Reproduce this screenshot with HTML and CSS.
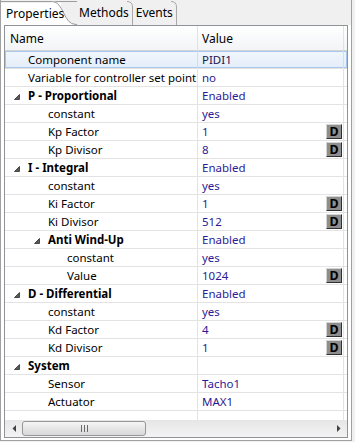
FILE: index.html
```html
<!DOCTYPE html>
<html>
<head>
<meta charset="utf-8">
<link rel="stylesheet" href="styles.css">
</head>
<body>
<div class="frame">
  <div class="tabs">
    <div class="tab active">
      <span class="tab-label">Properties</span>
      <svg class="curve-big" width="26" height="25" viewBox="0 0 26 25">
        <path d="M0 1 H1 C13 1 12 25 25 25 H26 V25 H0 Z" fill="#ffffff"/>
        <path d="M0 1.5 H1 C13 1.5 12 24.5 25 24.5 H26" fill="none" stroke="#9c9c9c"/>
      </svg>
    </div>
    <div class="tab">Methods</div>
    <svg class="curve-small" width="6" height="25" viewBox="0 0 6 25"><path d="M0 1.5 Q5.5 1.5 5.5 7 V25" fill="none" stroke="#a8a8a8"/></svg>
    <div class="tab">Events</div>
    <svg class="curve-small" width="6" height="25" viewBox="0 0 6 25"><path d="M0 1.5 Q5.5 1.5 5.5 7 V25" fill="none" stroke="#a8a8a8"/></svg>
  </div>
  <div class="panel">
    <div class="tree">
      <div class="header">
        <div class="c1">Name</div>
        <div class="c2">Value</div>
      </div>
      <div class="rows">
        <div class="row sel"><div class="c1 l0"><span class="tw"></span>Component name</div><div class="c2"><span class="v">PIDI1</span></div></div>
        <div class="row"><div class="c1 l0"><span class="tw"></span>Variable for controller set point</div><div class="c2"><span class="v">no</span></div></div>
        <div class="row grp"><div class="c1 l0"><span class="tw"><svg width="6" height="6" viewBox="0 0 6 6"><polygon points="5.5,0.5 5.5,5.5 0.5,5.5" fill="#5a5a5a" stroke="#2e2e2e" stroke-width="0.8"/></svg></span>P - Proportional</div><div class="c2"><span class="v">Enabled</span></div></div>
        <div class="row"><div class="c1 l1"><span class="tw"></span>constant</div><div class="c2"><span class="v">yes</span></div></div>
        <div class="row"><div class="c1 l1"><span class="tw"></span>Kp Factor</div><div class="c2"><span class="v">1</span><span class="dbtn">D</span></div></div>
        <div class="row"><div class="c1 l1"><span class="tw"></span>Kp Divisor</div><div class="c2"><span class="v">8</span><span class="dbtn">D</span></div></div>
        <div class="row grp"><div class="c1 l0"><span class="tw"><svg width="6" height="6" viewBox="0 0 6 6"><polygon points="5.5,0.5 5.5,5.5 0.5,5.5" fill="#5a5a5a" stroke="#2e2e2e" stroke-width="0.8"/></svg></span>I - Integral</div><div class="c2"><span class="v">Enabled</span></div></div>
        <div class="row"><div class="c1 l1"><span class="tw"></span>constant</div><div class="c2"><span class="v">yes</span></div></div>
        <div class="row"><div class="c1 l1"><span class="tw"></span>Ki Factor</div><div class="c2"><span class="v">1</span><span class="dbtn">D</span></div></div>
        <div class="row"><div class="c1 l1"><span class="tw"></span>Ki Divisor</div><div class="c2"><span class="v">512</span><span class="dbtn">D</span></div></div>
        <div class="row grp"><div class="c1 l1"><span class="tw"><svg width="6" height="6" viewBox="0 0 6 6"><polygon points="5.5,0.5 5.5,5.5 0.5,5.5" fill="#5a5a5a" stroke="#2e2e2e" stroke-width="0.8"/></svg></span>Anti Wind-Up</div><div class="c2"><span class="v">Enabled</span></div></div>
        <div class="row"><div class="c1 l2"><span class="tw"></span>constant</div><div class="c2"><span class="v">yes</span></div></div>
        <div class="row"><div class="c1 l2"><span class="tw"></span>Value</div><div class="c2"><span class="v">1024</span><span class="dbtn">D</span></div></div>
        <div class="row grp"><div class="c1 l0"><span class="tw"><svg width="6" height="6" viewBox="0 0 6 6"><polygon points="5.5,0.5 5.5,5.5 0.5,5.5" fill="#5a5a5a" stroke="#2e2e2e" stroke-width="0.8"/></svg></span>D - Differential</div><div class="c2"><span class="v">Enabled</span></div></div>
        <div class="row"><div class="c1 l1"><span class="tw"></span>constant</div><div class="c2"><span class="v">yes</span></div></div>
        <div class="row"><div class="c1 l1"><span class="tw"></span>Kd Factor</div><div class="c2"><span class="v">4</span><span class="dbtn">D</span></div></div>
        <div class="row"><div class="c1 l1"><span class="tw"></span>Kd Divisor</div><div class="c2"><span class="v">1</span><span class="dbtn">D</span></div></div>
        <div class="row grp"><div class="c1 l0"><span class="tw"><svg width="6" height="6" viewBox="0 0 6 6"><polygon points="5.5,0.5 5.5,5.5 0.5,5.5" fill="#5a5a5a" stroke="#2e2e2e" stroke-width="0.8"/></svg></span>System</div><div class="c2"></div></div>
        <div class="row"><div class="c1 l1"><span class="tw"></span>Sensor</div><div class="c2"><span class="v">Tacho1</span></div></div>
        <div class="row"><div class="c1 l1"><span class="tw"></span>Actuator</div><div class="c2"><span class="v">MAX1</span></div></div>
        <div class="filler"><div class="c1"></div><div class="c2"></div></div>
      </div>
      <div class="hscroll">
        <div class="sb-btn"><svg width="4" height="7" viewBox="0 0 4 7"><polygon points="4,0 4,7 0.5,3.5" fill="#404040"/></svg></div>
        <div class="thumb"><svg width="7" height="7" viewBox="0 0 7 7"><path d="M0.5 0 V7 M3.5 0 V7 M6.5 0 V7" stroke="#6a6a6a"/></svg></div>
        <div class="sb-track"></div>
        <div class="sb-btn"><svg width="4" height="7" viewBox="0 0 4 7"><polygon points="0,0 0,7 3.5,3.5" fill="#404040"/></svg></div>
      </div>
    </div>
  </div>
</div>
</body>
</html>
```

FILE: styles.css
```css
* { box-sizing: border-box; margin: 0; padding: 0; }
html, body { width: 355px; height: 442px; overflow: hidden; }
body {
  background: #f0f0f0;
  font-family: "Noto Sans", "Open Sans", sans-serif;
  font-size: 11.5px;
  color: #000;
}
.frame {
  width: 352px;
  height: 441px;
  border: 1px solid #a0a0a0;
  border-top: none;
  display: flex;
  flex-direction: column;
}
.tabs {
  height: 25px;
  flex: none;
  display: flex;
  align-items: stretch;
  background: #f0f0f0;
  font-size: 12px;
}
.tab {
  display: flex;
  align-items: center;
  padding: 0 0 1px 3px;
  white-space: nowrap;
}
.tab.active {
  background: linear-gradient(#ffffff, #ffffff) no-repeat 0 1px / 60px 24px;
  padding: 0;
  border-top: 1px solid #9c9c9c;
  margin-top: 1px;
  width: 76px;
  align-items: flex-start;
}
.tab-label {
  position: relative;
  z-index: 1;
  padding: 3px 0 0 5px;
  width: 60px;
}
.curve-big {
  flex: none;
  margin-left: -10px;
  margin-top: -2px;
}
.tabs .tab:nth-child(2) { padding-left: 2px; padding-right: 0; }
.curve-small { flex: none; margin-left: -2px; }
.panel {
  flex: 1;
  background: #fff;
  padding: 0 3px 2px 3px;
  display: flex;
}
.tree {
  flex: 1;
  border: 1px solid #8f9398;
  display: flex;
  flex-direction: column;
  background: #fff;
}
.header {
  height: 25px;
  flex: none;
  display: flex;
  background: linear-gradient(#ffffff, #f3f4f6);
  border-bottom: 1px solid #d5d5d5;
}
.header .c1, .header .c2 {
  display: flex;
  align-items: center;
  font-size: 12px;
}
.c1 {
  width: 193px;
  flex: none;
  border-right: 1px solid #e3e3e3;
  padding-left: 5px;
  white-space: nowrap;
  overflow: hidden;
  display: flex;
  align-items: center;
}
.c2 {
  width: 146px;
  flex: none;
  border-right: 1px solid #e3e3e3;
  padding-left: 4px;
  display: flex;
  align-items: center;
  white-space: nowrap;
}
.rows {
  flex: 1;
  display: flex;
  flex-direction: column;
}
.row {
  height: 18px;
  flex: none;
  display: flex;
  border-bottom: 1px solid #e3e3e3;
}
.row .c1 { padding-left: 9px; }
.row .c1.l1 { padding-left: 29px; }
.row .c1.l2 { padding-left: 48px; }
.tw {
  width: 14px;
  flex: none;
  display: flex;
  align-items: center;
  padding-top: 3px;
}
.grp .c1 { font-weight: bold; }
.v { color: #2c1a96; flex: 1; }
.sel {
  background: linear-gradient(#f1f6fc, #e4edf9);
  box-shadow: inset 0 0 0 1px #a9c6ec;
}
.sel .c1, .sel .c2 { border-right-color: #cfdff3; }
.sel .v { color: #1c1550; }
.dbtn {
  width: 16px;
  height: 15px;
  margin-right: 1px;
  background: #8e8e8e;
  border: 1px solid;
  border-color: #d4d4d4 #303030 #303030 #d4d4d4;
  font-weight: bold;
  font-size: 12.5px;
  line-height: 13px;
  text-align: center;
  color: #000;
}
.filler {
  flex: 1;
  display: flex;
}
.hscroll {
  height: 17px;
  flex: none;
  display: flex;
  align-items: center;
  background: linear-gradient(#e6e6e6, #f3f3f3);
}
.sb-btn {
  width: 17px;
  height: 17px;
  flex: none;
  display: flex;
  align-items: center;
  justify-content: center;
}
.thumb {
  width: 124px;
  height: 15px;
  flex: none;
  border: 1px solid #979797;
  border-radius: 3px;
  background: linear-gradient(#f6f6f6, #e6e6e6 50%, #d8d8d8);
  display: flex;
  align-items: center;
  justify-content: center;
}
.sb-track { flex: 1; }
```
